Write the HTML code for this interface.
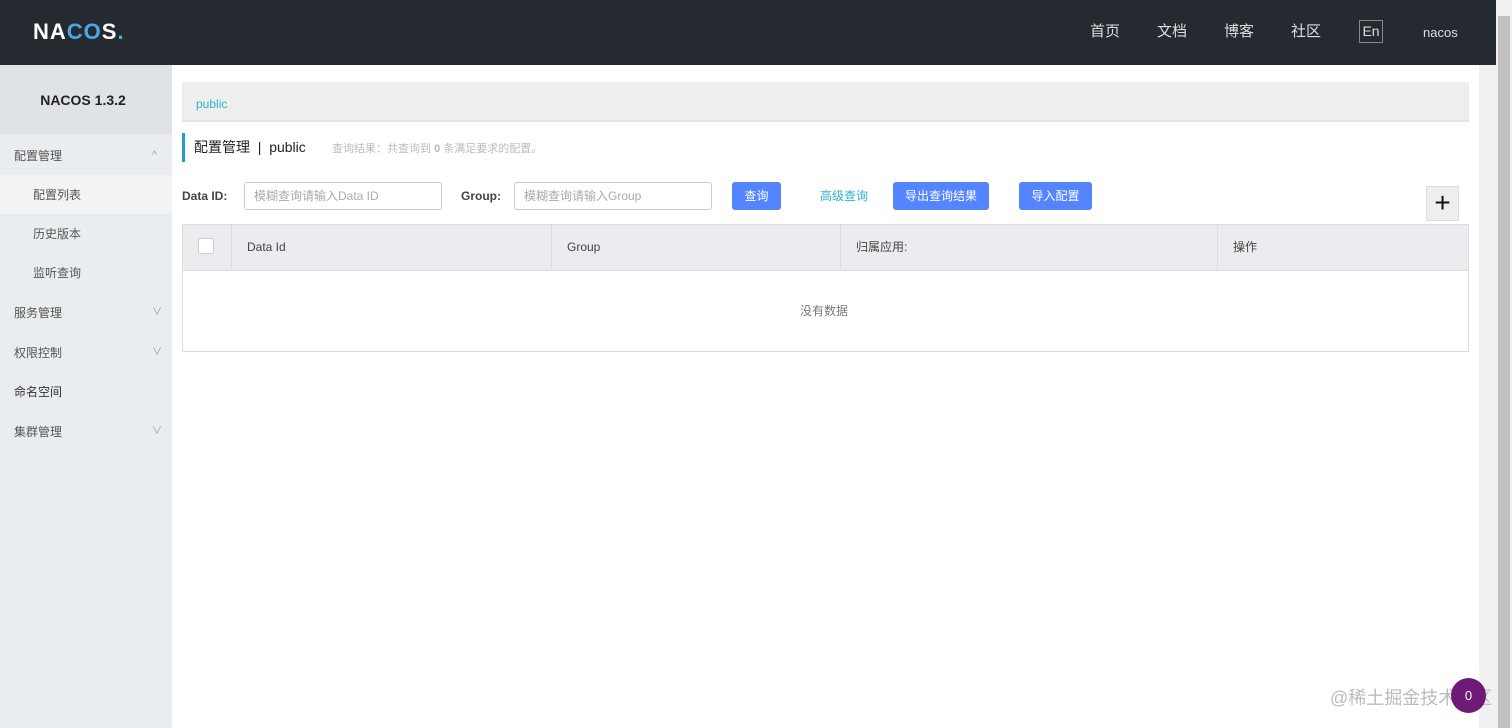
<!DOCTYPE html>
<html><head><meta charset="utf-8"><style>
*{box-sizing:border-box;margin:0;padding:0}
body{width:1512px;height:728px;overflow:hidden;background:#fff;font-family:"Liberation Sans","Noto Sans CJK SC",sans-serif;position:relative;color:#333}
.a{position:absolute;line-height:16px}
.top{left:0;top:0;width:1496px;height:65px;background:#252a31}
.nav{top:24px;font-size:15px;color:#ddd}
.side{left:0;top:65px;width:172px;height:663px;background:#eaedf0}
.mi{left:14px;font-size:12px;color:#555}
.si{left:33px;font-size:12px;color:#555}
.chev{left:152px;font-size:10px;color:#999}
.btn{background:#5584ff;color:#fff;font-size:12px;border-radius:3px;text-align:center;height:28px;line-height:28px;top:182px}
.inp{height:28px;top:182px;border:1px solid #ccc;border-radius:3px;font-size:12px;color:#aaa;padding-left:9px;line-height:26px}
.th{top:239px;font-size:12px;color:#444}
.vl{top:225px;width:1px;height:46px;background:#ddd}
</style></head><body>
<div class="a top"></div>
<div class="a" style="left:33px;top:21px;font-size:22px;line-height:22px;font-weight:bold;color:#fff;letter-spacing:1px">NA<span style="color:#4aa8e6">CO</span>S<span style="color:#2dc0d8">.</span></div>
<div class="a nav" style="left:1090px">首页</div>
<div class="a nav" style="left:1157px">文档</div>
<div class="a nav" style="left:1224px">博客</div>
<div class="a nav" style="left:1291px">社区</div>
<div class="a" style="left:1359px;top:20px;width:24px;height:23px;border:1px solid #888;color:#ddd;font-size:14px;text-align:center;line-height:21px">En</div>
<div class="a" style="left:1423px;top:25px;font-size:13px;color:#ddd">nacos</div>
<div class="a" style="left:1496px;top:0;width:16px;height:728px;background:#f1f1f1"></div>
<div class="a" style="left:1498px;top:16px;width:12px;height:712px;background:#c1c1c1"></div>
<div class="a" style="left:1479px;top:65px;width:17px;height:663px;background:#f1f1f1"></div>

<div class="a side"></div>
<div class="a" style="left:0;top:65px;width:172px;height:69px;background:#dfe3e7"></div>
<div class="a" style="left:0;top:92px;width:166px;text-align:center;font-size:14px;font-weight:bold;color:#222">NACOS 1.3.2</div>
<div class="a mi" style="top:148px">配置管理</div><div class="a chev" style="top:148px">^</div>
<div class="a" style="left:0;top:175px;width:172px;height:39px;background:#f1f3f5"></div>
<div class="a si" style="top:187px">配置列表</div>
<div class="a si" style="top:226px">历史版本</div>
<div class="a si" style="top:265px">监听查询</div>
<div class="a mi" style="top:305px">服务管理</div><div class="a chev" style="top:305px">∨</div>
<div class="a mi" style="top:345px">权限控制</div><div class="a chev" style="top:345px">∨</div>
<div class="a mi" style="top:384px;color:#333">命名空间</div>
<div class="a mi" style="top:424px">集群管理</div><div class="a chev" style="top:424px">∨</div>

<div class="a" style="left:182px;top:82px;width:1287px;height:40px;background:#eee;border-bottom:2px solid #e3e3e3"></div>
<div class="a" style="left:196px;top:96px;font-size:12px;color:#2bb3c9">public</div>
<div class="a" style="left:182px;top:133px;width:3px;height:29px;background:#209bd4"></div>
<div class="a" style="left:194px;top:139px;font-size:14px;color:#222">配置管理 &nbsp;| &nbsp;public</div>
<div class="a" style="left:332px;top:141px;font-size:11px;color:#bbb">查询结果：共查询到 <b>0</b> 条满足要求的配置。</div>

<div class="a" style="left:182px;top:188px;font-size:12px;font-weight:bold;color:#444">Data ID:</div>
<div class="a inp" style="left:244px;width:198px">模糊查询请输入Data ID</div>
<div class="a" style="left:461px;top:188px;font-size:12px;font-weight:bold;color:#444">Group:</div>
<div class="a inp" style="left:514px;width:198px">模糊查询请输入Group</div>
<div class="a btn" style="left:732px;width:49px">查询</div>
<div class="a" style="left:820px;top:188px;font-size:12px;color:#2bb3c9">高级查询</div>
<div class="a btn" style="left:893px;width:96px">导出查询结果</div>
<div class="a btn" style="left:1019px;width:73px">导入配置</div>
<div class="a" style="left:1426px;top:186px;width:33px;height:35px;background:#eee;border:1px solid #ddd;font-size:28px;line-height:31px;text-align:center;color:#111">+</div>

<div class="a" style="left:182px;top:224px;width:1287px;height:128px;border:1px solid #ddd"></div>
<div class="a" style="left:183px;top:225px;width:1285px;height:46px;background:#ebecf0;border-bottom:1px solid #ddd"></div>
<div class="a" style="left:198px;top:238px;width:16px;height:16px;background:#fff;border:1px solid #ccc;border-radius:3px"></div>
<div class="a vl" style="left:231px"></div><div class="a vl" style="left:551px"></div><div class="a vl" style="left:840px"></div><div class="a vl" style="left:1217px"></div>
<div class="a th" style="left:247px">Data Id</div>
<div class="a th" style="left:567px">Group</div>
<div class="a th" style="left:856px">归属应用:</div>
<div class="a th" style="left:1233px">操作</div>
<div class="a" style="left:800px;top:303px;font-size:12px;color:#777">没有数据</div>

<div class="a" style="left:1330px;top:688px;font-size:18px;line-height:20px;color:#bbb">@稀土掘金技术社区</div>
<div class="a" style="left:1451px;top:678px;width:35px;height:35px;border-radius:50%;background:#6e1b78;color:#fff;font-size:13px;text-align:center;line-height:35px">0</div>
</body></html>
